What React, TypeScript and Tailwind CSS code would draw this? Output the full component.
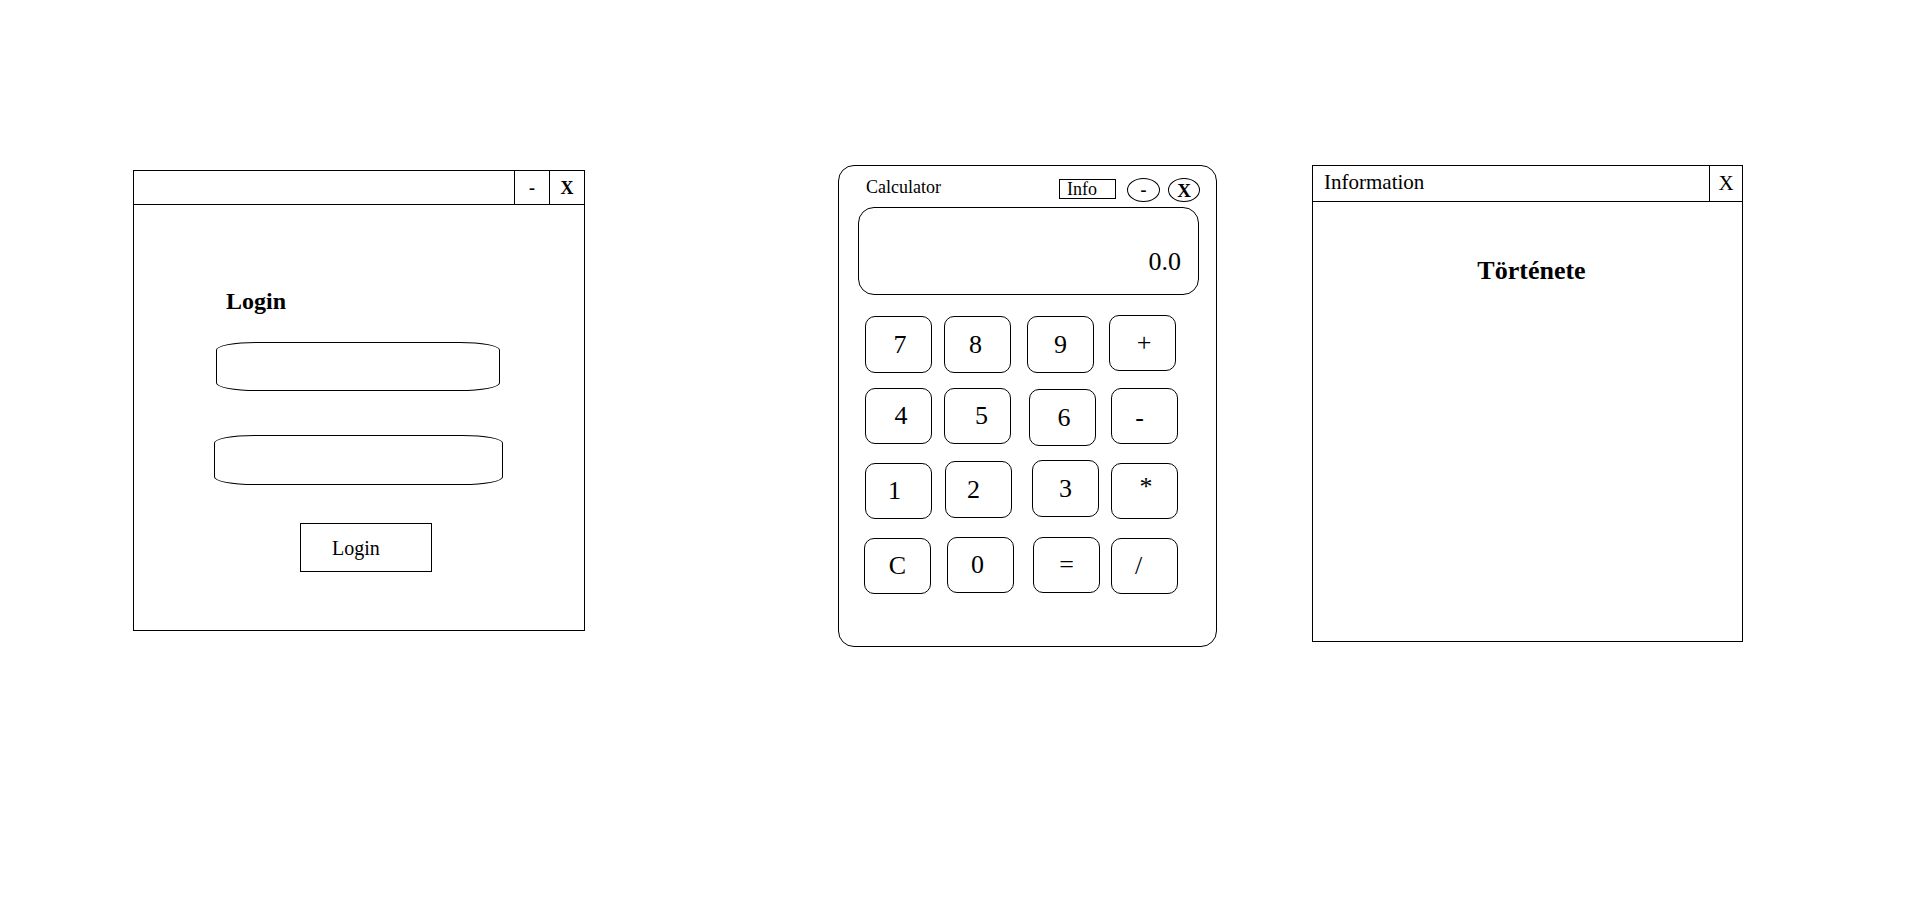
import React from "react";

const keyRows = [
  {
    rowCls: "h-[73px]",
    keys: [
      { label: "7", cls: "ml-[26px] mt-px h-[57px] pl-[3px]" },
      { label: "8", cls: "ml-[12px] mt-px h-[57px] pr-1" },
      { label: "9", cls: "ml-[16px] mt-px h-[57px]" },
      { label: "+", cls: "ml-[15px] mt-0 h-[56px] pl-[3px]" },
    ],
  },
  {
    rowCls: "h-[72px]",
    keys: [
      { label: "4", cls: "ml-[26px] mt-0 h-[56px] pl-[5px]" },
      { label: "5", cls: "ml-[12px] mt-0 h-[56px] pl-2" },
      { label: "6", cls: "ml-[18px] mt-px h-[57px] pl-[3px]" },
      { label: "-", cls: "ml-[15px] mt-0 h-[56px] pr-[10px] pt-1" },
    ],
  },
  {
    rowCls: "h-[77px]",
    keys: [
      { label: "1", cls: "ml-[26px] mt-[3px] h-[56px] pr-2" },
      { label: "2", cls: "ml-[13px] mt-px h-[57px] pr-[10px]" },
      { label: "3", cls: "ml-[20px] mt-0 h-[57px]" },
      { label: "*", cls: "ml-[12px] mt-[3px] h-[56px] pl-[3px] pb-2" },
    ],
  },
  {
    rowCls: "h-[58px]",
    keys: [
      { label: "C", cls: "ml-[25px] mt-px h-[56px]" },
      { label: "0", cls: "ml-[16px] mt-0 h-[56px] pr-[6px]" },
      { label: "=", cls: "ml-[19px] mt-0 h-[56px]" },
      { label: "/", cls: "ml-[11px] mt-px h-[56px] pr-3" },
    ],
  },
];

const LoginWindow = () => (
  <div className="mt-[5px] flex h-[461px] w-[452px] shrink-0 flex-col border border-black bg-white">
    <div className="flex h-[34px] shrink-0 justify-end border-b border-black">
      <div className="flex w-[35px] items-center justify-center border-l border-black text-[18px] font-bold leading-none">
        -
      </div>
      <div className="flex w-[35px] items-center justify-center border-l border-black text-[18px] font-bold leading-none">
        X
      </div>
    </div>
    <div className="flex flex-col items-start">
      <h1 className="ml-[92px] mt-[84px] text-[24px] font-bold leading-none">Login</h1>
      <div className="ml-[82px] mt-[29px] h-[49px] w-[284px] rounded-[40px/8px] border border-black" />
      <div className="ml-[80px] mt-[44px] h-[50px] w-[289px] rounded-[40px/8px] border border-black" />
      <button className="ml-[166px] mt-[38px] flex h-[49px] w-[132px] items-center border border-black pl-[31px] text-[20px] leading-none">
        Login
      </button>
    </div>
  </div>
);

const CalculatorWindow = () => (
  <div className="ml-[253px] flex h-[482px] w-[379px] shrink-0 flex-col rounded-[16px] border border-black bg-white">
    <div className="flex h-[41px] shrink-0 items-start justify-between pl-[27px] pr-[16px] pt-[12px]">
      <span className="text-[18px] leading-none">Calculator</span>
      <div className="flex items-start">
        <div className="mt-px flex h-[20px] w-[57px] items-center border border-black pl-[7px] text-[18px] leading-none">
          Info
        </div>
        <div className="ml-[11px] flex h-[24px] w-[33px] items-center justify-center rounded-[50%] border border-black text-[18px] font-bold leading-none">
          -
        </div>
        <div className="ml-[8px] flex h-[24px] w-[32px] items-center justify-center rounded-[50%] border border-black text-[19px] font-bold leading-none">
          X
        </div>
      </div>
    </div>
    <div className="ml-[19px] h-[88px] w-[341px] shrink-0 rounded-[16px] border border-black pr-[17px] pt-[41px] text-right text-[26px] leading-none">
      0.0
    </div>
    <div className="mt-[20px] flex flex-col">
      {keyRows.map((row, i) => (
        <div key={i} className={`flex items-start ${row.rowCls}`}>
          {row.keys.map((k) => (
            <button
              key={k.label}
              className={`flex w-[67px] items-center justify-center rounded-[10px] border border-black text-[26px] leading-none ${k.cls}`}
            >
              {k.label}
            </button>
          ))}
        </div>
      ))}
    </div>
  </div>
);

const InfoWindow = () => (
  <div className="ml-[95px] flex h-[477px] w-[431px] shrink-0 flex-col border border-black bg-white">
    <div className="flex h-[36px] shrink-0 border-b border-black">
      <span className="flex-1 pl-[11px] pt-[6px] text-[21px] leading-none">Information</span>
      <div className="flex w-[33px] items-center justify-center border-l border-black text-[21px] leading-none">
        X
      </div>
    </div>
    <h2 className="mt-[56px] pl-2 text-center text-[26px] font-bold leading-none">Története</h2>
  </div>
);

export default function App() {
  return (
    <div className="flex h-[898px] w-full items-start bg-white pl-[133px] pt-[165px] font-['Liberation_Serif',serif] text-black">
      <LoginWindow />
      <CalculatorWindow />
      <InfoWindow />
    </div>
  );
}
